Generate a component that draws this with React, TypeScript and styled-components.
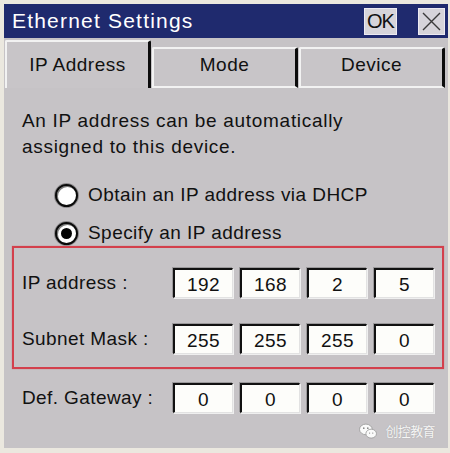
import React from "react";
import styled, { createGlobalStyle } from "styled-components";

const GlobalStyle = createGlobalStyle`
  html, body {
    margin: 0;
    padding: 0;
    background: #ebe8df;
  }
  * {
    box-sizing: border-box;
  }
`;

const Window = styled.div`
  width: 450px;
  height: 453px;
  padding: 4px 2px 5px 4px;
  background: #ebe8df;
  display: flex;
  flex-direction: column;
  font-family: "Liberation Sans", Arial, sans-serif;
  color: #111;
`;

const TitleBar = styled.div`
  flex: none;
  height: 34px;
  background: #1f2a6e;
  display: flex;
  align-items: center;
  padding: 0 3px 0 8px;
`;

const Title = styled.div`
  flex: 1;
  color: #fff;
  font-size: 21px;
  letter-spacing: 1.2px;
  margin-top: -1px;
`;

const CaptionButton = styled.button<{ $wide?: boolean; $gap?: number }>`
  width: ${(p) => (p.$wide ? 33 : 27)}px;
  height: 27px;
  margin-right: ${(p) => p.$gap ?? 0}px;
  padding: 0;
  border: 1px solid #eceaf2;
  background: #d6d4da;
  color: #111;
  font-family: "Liberation Sans", Arial, sans-serif;
  font-size: 20px;
  letter-spacing: -1px;
  line-height: 25px;
  display: flex;
  align-items: center;
  justify-content: center;
`;

const TabStrip = styled.div`
  flex: none;
  height: 50px;
  background: #c6c3c6;
  display: flex;
  align-items: flex-end;
  gap: 1px;
  padding: 0 3px 0 1px;
`;

const Tab = styled.div<{ $active?: boolean }>`
  flex: 1;
  height: ${(p) => (p.$active ? 48 : 41)}px;
  background: #c8c5c8;
  border-top: 2px solid #f2f2f2;
  border-left: 2px solid #f2f2f2;
  border-right: 3px solid #0c0c0c;
  border-bottom: ${(p) => (p.$active ? "none" : "2px solid #f2f2f2")};
  border-radius: 2px 2px 0 0;
  display: flex;
  justify-content: center;
  align-items: flex-start;
  padding-top: ${(p) => (p.$active ? 12 : 5)}px;
  font-size: 19px;
  letter-spacing: 0.5px;
  line-height: 22px;
`;

const Panel = styled.div`
  flex: 1;
  background: #c6c3c6;
  padding: 20px 4px 0 8px;
  display: flex;
  flex-direction: column;
  font-size: 19px;
  letter-spacing: 0.5px;
`;

const Intro = styled.p`
  margin: 0;
  padding-left: 10px;
  line-height: 26px;
  letter-spacing: 0.7px;
`;

const RadioGroup = styled.div`
  margin-top: 22px;
  padding-left: 43px;
  display: flex;
  flex-direction: column;
  gap: 12px;
`;

const RadioRow = styled.label`
  display: flex;
  align-items: center;
  gap: 10px;
  height: 26px;
  line-height: 26px;
  letter-spacing: 0.45px;
`;

const RadioMark = styled.span<{ $checked?: boolean }>`
  flex: none;
  position: relative;
  width: 23px;
  height: 23px;
  border-radius: 50%;
  background: #fff;
  border: 2px solid #0a0a0a;
  box-shadow: 0 0 0 1px #8c8a8c, inset 1px 1px 0 #7a7a7a;

  &::after {
    content: "";
    position: absolute;
    left: 50%;
    top: 50%;
    width: 11px;
    height: 11px;
    margin: -5.5px 0 0 -5.5px;
    border-radius: 50%;
    background: #050505;
    display: ${(p) => (p.$checked ? "block" : "none")};
  }
`;

const Highlight = styled.div`
  border: 2px solid #d3404c;
  box-shadow: 0 0 1px rgba(211, 64, 76, 0.6);
  padding: 20px 0 13px 8px;
  display: flex;
  flex-direction: column;
  gap: 26px;
`;

const FieldRow = styled.div<{ $inset?: number; $top?: number }>`
  display: flex;
  align-items: center;
  gap: 7px;
  height: 30px;
  padding-left: ${(p) => p.$inset ?? 0}px;
  margin-top: ${(p) => p.$top ?? 0}px;
`;

const FieldLabel = styled.span`
  flex: none;
  width: 144px;
  white-space: nowrap;
  letter-spacing: 0.4px;
`;

const Octet = styled.div`
  flex: none;
  width: 60px;
  height: 30px;
  background: #fdfdfa;
  border-top: 2px solid #111;
  border-left: 2px solid #111;
  border-right: 1px solid #e2e2e2;
  border-bottom: 1px solid #e2e2e2;
  box-shadow: 1px 1px 0 #efefef, -1px -1px 0 #9a989a;
  display: flex;
  align-items: center;
  justify-content: center;
  font-size: 19px;
  line-height: 1;
  padding-top: 1px;
`;

const Watermark = styled.div`
  margin-top: 8px;
  align-self: flex-end;
  margin-right: 9px;
  display: flex;
  align-items: center;
  gap: 8px;
  color: #f6f6f6;
  font-family: "Noto Sans CJK SC", "Noto Sans", sans-serif;
  font-size: 13px;
  letter-spacing: -0.6px;
  text-shadow: 0 0 1px rgba(120, 120, 120, 0.5);
`;

const WeChatMark = () => (
  <svg width="18" height="16" viewBox="0 0 17 15">
    <ellipse cx="6.5" cy="6" rx="6" ry="5" fill="#fafafa" stroke="#9a9a9a" strokeWidth="0.8" />
    <ellipse cx="11.5" cy="10" rx="5" ry="4.2" fill="#fafafa" stroke="#9a9a9a" strokeWidth="0.8" />
    <circle cx="4.5" cy="4.8" r="0.8" fill="#888" />
    <circle cx="8.3" cy="4.8" r="0.8" fill="#888" />
    <circle cx="10" cy="9.4" r="0.6" fill="#888" />
    <circle cx="13" cy="9.4" r="0.6" fill="#888" />
  </svg>
);

const CloseGlyph = () => (
  <svg width="23" height="23" viewBox="0 0 23 23">
    <path d="M3 3 L20 20 M20 3 L3 20" stroke="#3a3a3a" strokeWidth="1.4" fill="none" />
  </svg>
);

const ipFields: { label: string; values: string[] }[] = [
  { label: "IP address :", values: ["192", "168", "2", "5"] },
  { label: "Subnet Mask :", values: ["255", "255", "255", "0"] },
];

const gateway = { label: "Def. Gateway :", values: ["0", "0", "0", "0"] };

export default function App() {
  return (
    <>
      <GlobalStyle />
      <Window>
        <TitleBar>
          <Title>Ethernet Settings</Title>
          <CaptionButton $wide $gap={21}>OK</CaptionButton>
          <CaptionButton>
            <CloseGlyph />
          </CaptionButton>
        </TitleBar>
        <TabStrip>
          <Tab $active>IP Address</Tab>
          <Tab>Mode</Tab>
          <Tab>Device</Tab>
        </TabStrip>
        <Panel>
          <Intro>
            An IP address can be automatically
            <br />
            assigned to this device.
          </Intro>
          <RadioGroup>
            <RadioRow>
              <RadioMark />
              Obtain an IP address via DHCP
            </RadioRow>
            <RadioRow>
              <RadioMark $checked />
              Specify an IP address
            </RadioRow>
          </RadioGroup>
          <Highlight>
            {ipFields.map((f) => (
              <FieldRow key={f.label}>
                <FieldLabel>{f.label}</FieldLabel>
                {f.values.map((v, i) => (
                  <Octet key={i}>{v}</Octet>
                ))}
              </FieldRow>
            ))}
          </Highlight>
          <FieldRow $inset={10} $top={14}>
            <FieldLabel>{gateway.label}</FieldLabel>
            {gateway.values.map((v, i) => (
              <Octet key={i}>{v}</Octet>
            ))}
          </FieldRow>
          <Watermark>
            <WeChatMark />
            创控教育
          </Watermark>
        </Panel>
      </Window>
    </>
  );
}
